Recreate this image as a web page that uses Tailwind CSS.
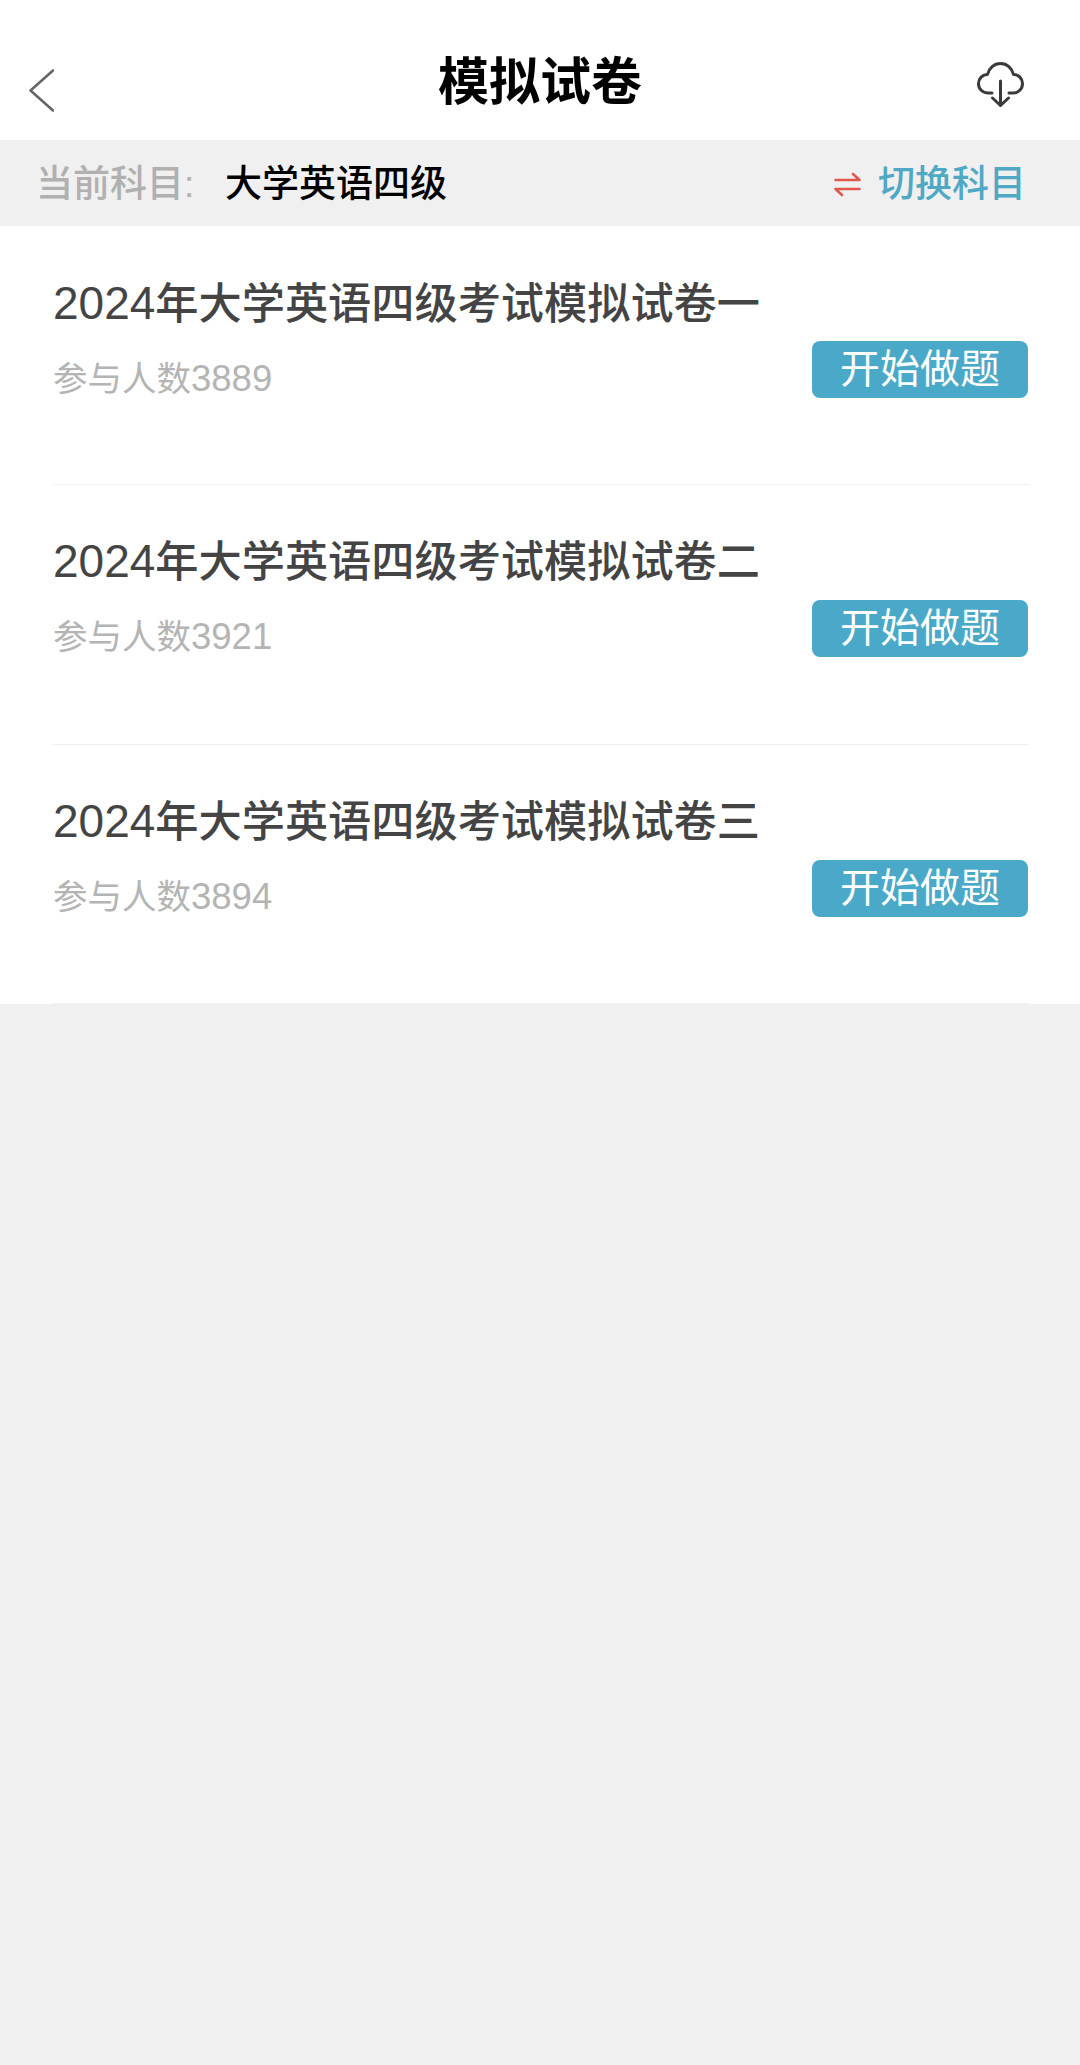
<!DOCTYPE html>
<html lang="zh-CN">
<head>
<meta charset="utf-8">
<script src="https://cdn.jsdelivr.net/npm/@tailwindcss/browser@4"></script>
</head>
<body class="bg-[#f0f0f0] font-['Liberation_Sans','Noto_Sans_CJK_SC',sans-serif]">
<div class="w-[1080px] h-[2065px] flex flex-col">
  <header class="h-[140px] bg-white relative flex items-start justify-between pl-[29px] pr-[56px]">
    <svg class="w-[25px] h-[43px] mt-[69px]" viewBox="0 0 25 43" fill="none" stroke="#666666" stroke-width="2.600" stroke-linecap="round" stroke-linejoin="round"><path d="M24 1.500 L1.500 21.500 L24 41.500"/></svg>
    <h1 class="absolute left-0 right-0 top-[53px] text-center text-[51px] leading-[60px] font-bold text-black">模拟试卷</h1>
    <svg class="w-[47px] h-[45px] mt-[62px]" viewBox="0 0 47 45" fill="none" stroke="#3a3a3a" stroke-width="3" stroke-linecap="round" stroke-linejoin="round"><path d="M15 31 H11 C5.500 31 1.500 27 1.500 21.500 C1.500 16.500 5.500 12.500 10.500 12.500 C12 6 17 1.500 23.500 1.500 C30 1.500 35 6 36.500 12.500 C41.500 12.500 45.500 16.500 45.500 21.500 C45.500 27 41.500 31 36 31 H32"/><path d="M23.500 19 V43"/><path d="M15.500 36 L23.500 43.500 L31.500 36"/></svg>
  </header>
  <div class="h-[86px] flex items-center justify-between pl-[36px] pr-[54px] pt-[3px]">
    <div class="flex items-center text-[37px] leading-[44px]">
      <span class="text-[#b0b0b0] font-medium w-[189px]">当前科目:</span>
      <span class="text-black font-medium">大学英语四级</span>
    </div>
    <div class="flex items-center text-[37px] leading-[44px] text-[#4fa8c4] font-medium">
      <svg class="w-[27px] h-[25px] mr-[17px]" viewBox="0 0 27 25" fill="none" stroke="#e2574c" stroke-width="2.600" stroke-linecap="round" stroke-linejoin="round"><path d="M1.500 8 H25.500 L19 2"/><path d="M25.500 17 H1.500 L8 23"/></svg>
      <span>切换科目</span>
    </div>
  </div>
  <main class="bg-white pl-[53px] pr-[52px]">
    <article class="h-[259px] border-b border-[#efefef] flex items-start justify-between pt-[47px]">
      <div>
        <h2 class="text-[43.200px] leading-[60px] text-[#444444] font-medium"><span class="text-[46px]">2024</span>年大学英语四级考试模拟试卷一</h2>
        <p class="mt-[25px] text-[34.500px] leading-[40px] text-[#b4b4b4]">参与人数<span class="text-[36.500px]">3889</span></p>
      </div>
      <button class="mt-[68px] w-[216px] h-[57px] rounded-[8px] bg-[#4aa9c8] text-white text-[40px] leading-[57px] text-center">开始做题</button>
    </article>
    <article class="h-[260px] border-b border-[#efefef] flex items-start justify-between pt-[46px]">
      <div>
        <h2 class="text-[43.200px] leading-[60px] text-[#444444] font-medium"><span class="text-[46px]">2024</span>年大学英语四级考试模拟试卷二</h2>
        <p class="mt-[25px] text-[34.500px] leading-[40px] text-[#b4b4b4]">参与人数<span class="text-[36.500px]">3921</span></p>
      </div>
      <button class="mt-[69px] w-[216px] h-[57px] rounded-[8px] bg-[#4aa9c8] text-white text-[40px] leading-[57px] text-center">开始做题</button>
    </article>
    <article class="h-[259px] border-b border-[#efefef] flex items-start justify-between pt-[46px]">
      <div>
        <h2 class="text-[43.200px] leading-[60px] text-[#444444] font-medium"><span class="text-[46px]">2024</span>年大学英语四级考试模拟试卷三</h2>
        <p class="mt-[25px] text-[34.500px] leading-[40px] text-[#b4b4b4]">参与人数<span class="text-[36.500px]">3894</span></p>
      </div>
      <button class="mt-[69px] w-[216px] h-[57px] rounded-[8px] bg-[#4aa9c8] text-white text-[40px] leading-[57px] text-center">开始做题</button>
    </article>
  </main>
</div>
</body>
</html>
